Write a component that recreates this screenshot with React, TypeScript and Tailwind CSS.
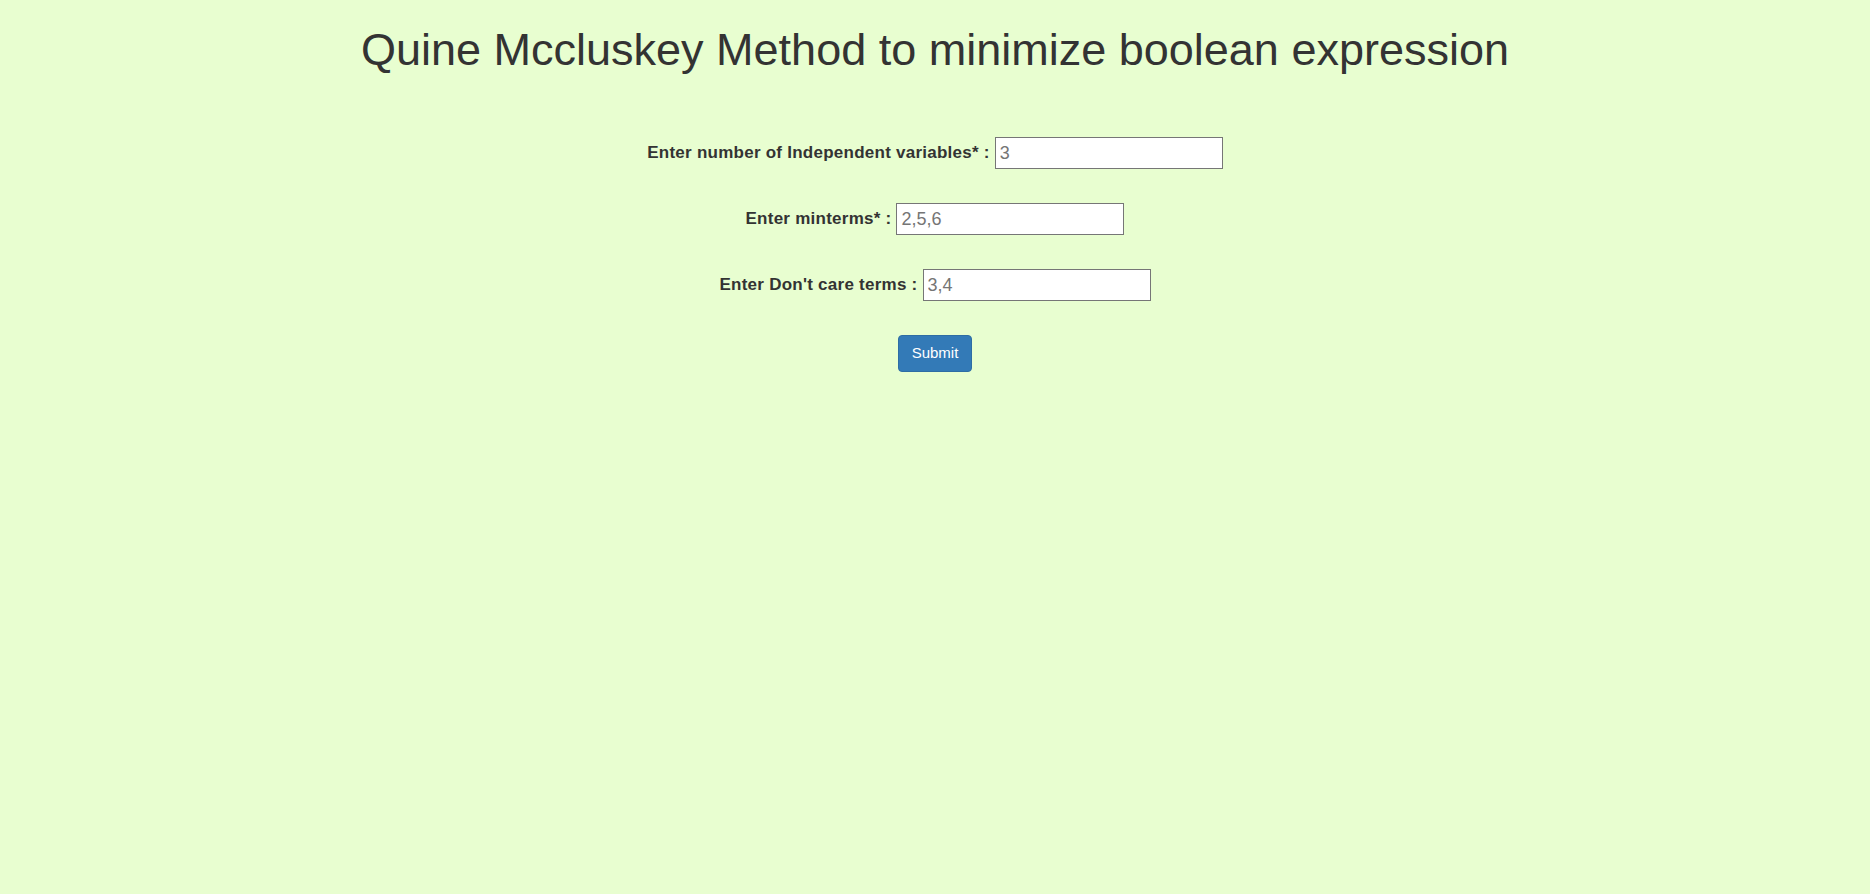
import React from "react";

const rows = [
  { label: "Enter number of Independent variables* :", ph: "3" },
  { label: "Enter minterms* :", ph: "2,5,6" },
  { label: "Enter Don't care terms :", ph: "3,4" },
];

export default function App() {
  return (
    <div className="min-h-screen w-full bg-[#e8fed0] text-[#333333]" style={{ fontFamily: '"Liberation Sans", Arial, sans-serif' }}>
      <h1 className="pt-[25px] text-center text-[45px] leading-[49px] font-normal text-[#333333]">
        Quine Mccluskey Method to minimize boolean expression
      </h1>
      <form className="mt-[63px] flex flex-col items-center gap-[34px]" onSubmit={(e) => e.preventDefault()}>
        {rows.map((r) => (
          <div key={r.label} className="flex h-[32px] items-center justify-center gap-[5px]">
            <label className="text-[17px] tracking-[0.25px] font-bold text-[#333333]">{r.label}</label>
            <input
              type="text"
              placeholder={r.ph}
              className="h-[32px] w-[228px] border border-[#767676] bg-white px-[4px] text-[18px] text-[#333333] placeholder:text-[#757575] outline-none"
            />
          </div>
        ))}
        <button
          type="submit"
          className="h-[37px] w-[74px] rounded-[4px] border border-[#2e6da4] bg-[#337ab7] text-[15px] text-white"
        >
          Submit
        </button>
      </form>
    </div>
  );
}
